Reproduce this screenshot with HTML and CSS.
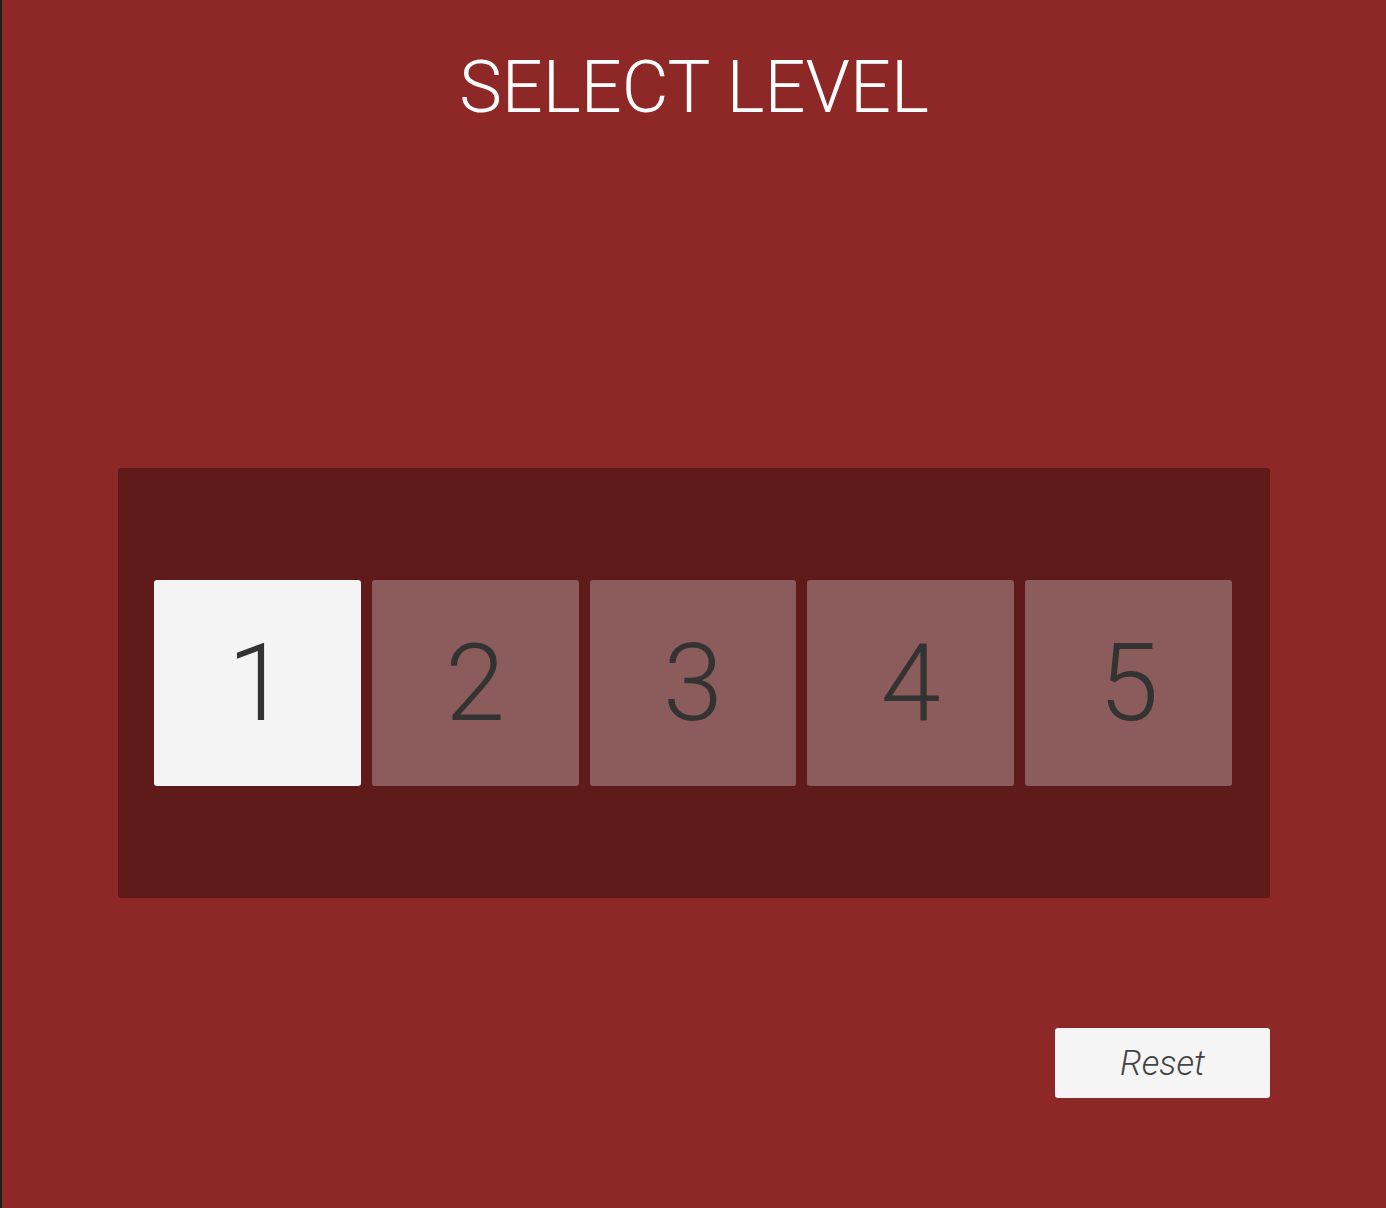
FILE: index.html
```html
<!DOCTYPE html>
<html lang="en">
<head>
<meta charset="utf-8">
<title>Select Level</title>
<link rel="stylesheet" href="styles.css">
</head>
<body>
<main class="page">
  <h1 class="title">SELECT LEVEL</h1>
  <section class="panel">
    <div class="tiles">
      <button class="tile tile-active">1</button>
      <button class="tile">2</button>
      <button class="tile">3</button>
      <button class="tile">4</button>
      <button class="tile">5</button>
    </div>
  </section>
  <div class="actions">
    <button class="reset">Reset</button>
  </div>
</main>
</body>
</html>
```

FILE: styles.css
```css
html, body {
  margin: 0;
  padding: 0;
  height: 100%;
}
body {
  background: #8d2826;
  border-left: 2px solid #1d1f1e;
  font-family: Roboto, "Liberation Sans", sans-serif;
  box-sizing: border-box;
}
.page {
  display: flex;
  flex-direction: column;
  padding: 0 116px 0 116px;
}
.title {
  margin: 52px 0 0;
  font-size: 72px;
  line-height: 72px;
  font-weight: 300;
  color: #ffffff;
  text-align: center;
  letter-spacing: 0;
}
.panel {
  margin-top: 344px;
  background: #5f1a1a;
  border-radius: 3px;
  padding: 112px 38px 112px 36px;
}
.tiles {
  display: flex;
  gap: 11px;
}
.tile {
  flex: 1 1 0;
  height: 206px;
  border: none;
  border-radius: 3px;
  background: #8c5c5c;
  color: #333333;
  font-family: Roboto, "Liberation Sans", sans-serif;
  font-size: 108px;
  line-height: 108px;
  font-weight: 300;
  display: flex;
  align-items: center;
  justify-content: center;
  padding: 0;
}
.tile-active {
  background: #f4f4f4;
}
.actions {
  display: flex;
  justify-content: flex-end;
  margin-top: 130px;
}
.reset {
  width: 215px;
  height: 70px;
  border: none;
  border-radius: 3px;
  background: #f5f5f5;
  color: #444444;
  font-family: Roboto, "Liberation Sans", sans-serif;
  font-style: italic;
  font-size: 35px;
  line-height: 35px;
  font-weight: 300;
  padding: 0;
}
```
